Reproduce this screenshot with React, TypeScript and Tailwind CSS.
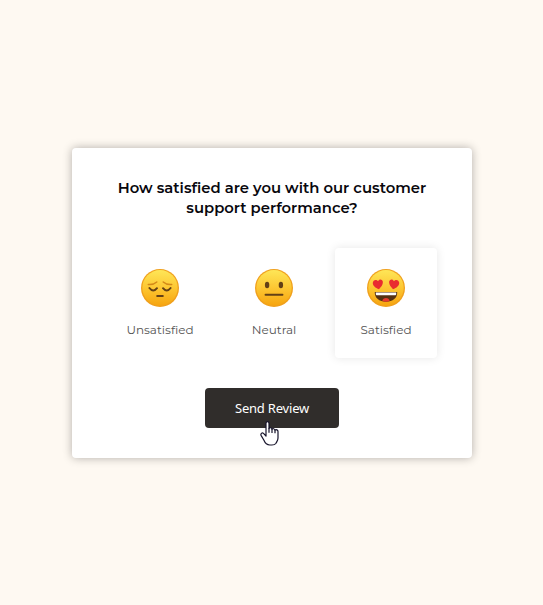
import type { ReactNode } from "react";

type FaceProps = { id: string; children: ReactNode };

function Face({ id, children }: FaceProps) {
  return (
    <svg className="block h-10 w-10" viewBox="0 0 40 40" aria-hidden="true">
      <defs>
        <linearGradient id={id} x1="0" y1="0" x2="0" y2="1">
          <stop offset="0" stopColor="#fee657" />
          <stop offset="0.5" stopColor="#fdc733" />
          <stop offset="1" stopColor="#f6a50f" />
        </linearGradient>
      </defs>
      <circle cx="20" cy="20" r="19" fill="#f0a01c" />
      <circle cx="20" cy="19.8" r="17.7" fill={`url(#${id})`} />
      {children}
    </svg>
  );
}

function SadFace() {
  return (
    <Face id="sad">
      <g fill="none" strokeLinecap="round">
        <path d="M8.3 16.5Q13.5 17 16.8 14M31.7 16.5Q26.5 17 23.2 14" stroke="#d48a18" strokeWidth="1.5" />
        <path d="M9.4 20Q13.2 25 17 20.2M23 20.2Q26.8 25 30.6 20" stroke="#634016" strokeWidth="2" />
        <path d="M17.2 28h5.6" stroke="#634016" strokeWidth="2" />
      </g>
    </Face>
  );
}

function NeutralFace() {
  return (
    <Face id="neutral">
      <ellipse cx="13.1" cy="17" rx="2.2" ry="3.2" fill="#634016" />
      <ellipse cx="26.9" cy="17" rx="2.2" ry="3.2" fill="#634016" />
      <path d="M11.5 26.8h17" stroke="#634016" strokeWidth="1.9" strokeLinecap="round" />
    </Face>
  );
}

function LoveFace() {
  return (
    <Face id="love">
      <path d="M13 21.2C9.4 19.9 6.6 17.6 6.8 14.7c.2-2.9 3.6-3.9 5.3-1.4 1-2.7 4.6-2.2 4.8.8.1 2.7-2 5.3-3.9 7.1Z" fill="#e92c30" />
      <path d="M27 21.2c3.6-1.3 6.4-3.6 6.2-6.5-.2-2.9-3.6-3.9-5.3-1.4-1-2.7-4.6-2.2-4.8.8-.1 2.7 2 5.3 3.9 7.1Z" fill="#e92c30" />
      <path d="M8.8 24h22.4c.4 5.9-4.5 9.8-11.2 9.8S8.4 29.9 8.8 24Z" fill="#553112" />
      <path d="M9.8 24.4h20.4v1.3c0 1-.5 1.6-1.5 1.6H11.3c-1 0-1.5-.6-1.5-1.6Z" fill="#fff" />
      <path d="M16.3 33.1c.3-1.8 1.8-3 3.7-3s3.4 1.2 3.7 3c-2.1.9-5.3.9-7.4 0Z" fill="#e83a2d" />
    </Face>
  );
}

function Pointer() {
  return (
    <svg className="pointer-events-none absolute left-[55px] top-[32.5px] h-[25px] w-[19px]" viewBox="0 0 19 25" aria-hidden="true">
      <path d="M6 14V2.5C6 .1 9 .1 9 2.5v5c.4-1.2 2.7-1 3 .7.8-1 2.6-.6 3 .9 1-.9 3-.2 3 1.4V17c0 2.5-1.2 3.5-2 5.2-.9 1.4-2.1 1.8-4.1 1.8H9.8C7.1 24 5 21.9 3.8 19L1.2 14.6C.2 12.8 2.1 11.2 3.5 12.4L6 15Z" fill="#fff" stroke="#17142b" strokeWidth="1.2" strokeLinejoin="round" />
      <path d="M9 7.3v4.5M12 8v4M15 9v3.3" stroke="#17142b" strokeWidth="1.2" />
    </svg>
  );
}

export default function App() {
  return (
    <main className="flex h-[605px] w-[543px] justify-center bg-[#fef9f2] pt-[148px] font-['Montserrat',Inter,sans-serif]">
      <section className="ml-px flex h-[310px] w-[400px] flex-col items-center rounded bg-white pt-[30px] shadow-[0_0_10px_rgba(0,0,0,0.3)]">
        <h1 className="w-[340px] text-center text-[14.8px] font-semibold leading-5 text-[#08070d]">
          How satisfied are you with our customer support performance?
        </h1>
        <div className="mt-[30px] flex h-[110px] w-full pl-[29px] text-[12px] leading-4 text-[#555]">
          <button className="flex w-[118px] flex-col items-center pt-5">
            <SadFace />
            <span className="mt-[14px]">Unsatisfied</span>
          </button>
          <button className="ml-[7px] flex w-[96px] flex-col items-center pt-5">
            <NeutralFace />
            <span className="mt-[14px]">Neutral</span>
          </button>
          <button className="ml-[13px] flex w-[102px] flex-col items-center rounded pt-5 shadow-[0_0_10px_rgba(0,0,0,0.1)]">
            <LoveFace />
            <span className="mt-[14px]">Satisfied</span>
          </button>
        </div>
        <div className="relative mt-[30px]">
          <button className="h-10 w-[134px] rounded bg-[#302d2b] pt-0.5 font-['Noto_Sans',sans-serif] text-[13px] tracking-[-0.2px] text-white">
            Send Review
          </button>
          <Pointer />
        </div>
      </section>
    </main>
  );
}
